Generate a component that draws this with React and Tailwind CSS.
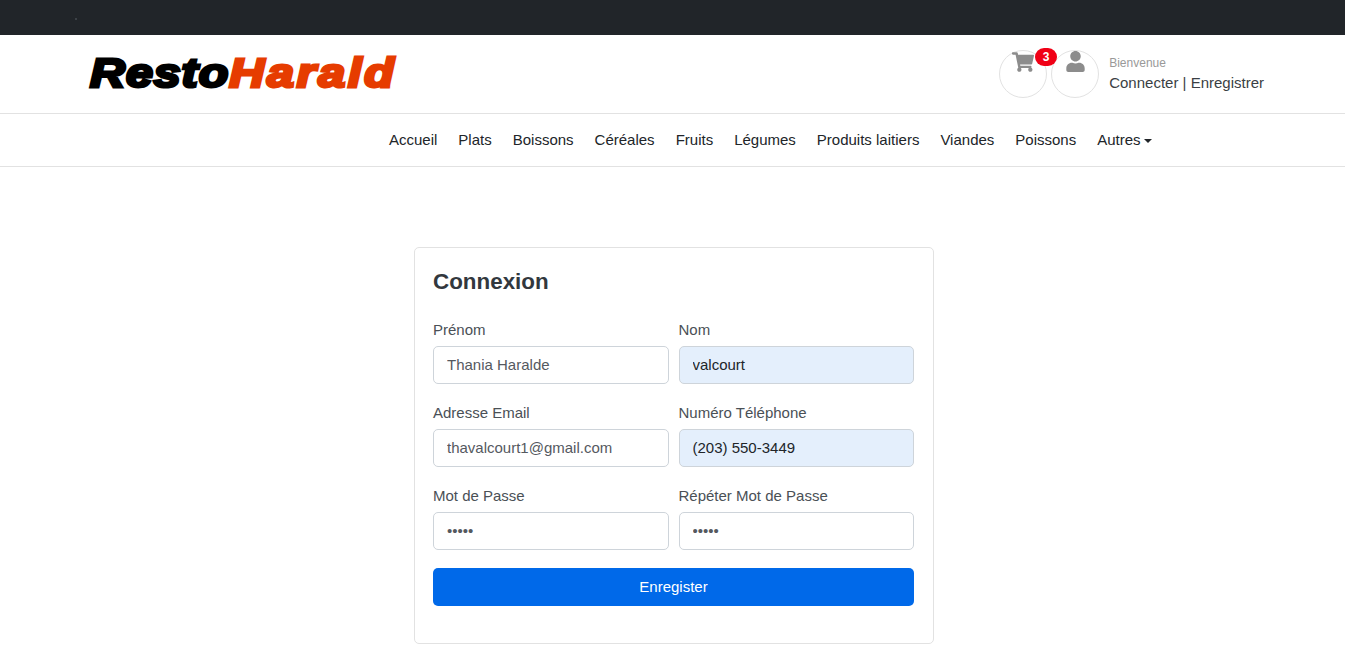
import React from "react";
import { FaShoppingCart, FaUser } from "react-icons/fa";

const navItems = ["Accueil", "Plats", "Boissons", "Céréales", "Fruits", "Légumes", "Produits laitiers", "Viandes", "Poissons"];

const fields = [
  { label: "Prénom", value: "Thania Haralde", type: "text" },
  { label: "Nom", value: "valcourt", type: "text", filled: true },
  { label: "Adresse Email", value: "thavalcourt1@gmail.com", type: "text" },
  { label: "Numéro Téléphone", value: "(203) 550-3449", type: "text", filled: true },
  { label: "Mot de Passe", value: "12345", type: "password" },
  { label: "Répéter Mot de Passe", value: "12345", type: "password" },
];

function Field({ label, value, type, filled }) {
  return (
    <label className="block">
      <span className="block h-[22px] mb-[5px] text-[15px] leading-[22px] text-[#4a5056]">{label}</span>
      <input
        type={type}
        defaultValue={value}
        className={
          filled
            ? "block w-full h-[38px] pl-[13px] pb-[2px] border border-[#ced4da] rounded-[5px] bg-[#e4effc] text-[15px] text-[#212529] outline-none"
            : "block w-full h-[38px] pl-[13px] pb-[2px] border border-[#ced4da] rounded-[5px] bg-white text-[15px] text-[#55595f] outline-none"
        }
      />
    </label>
  );
}

export default function App() {
  return (
    <div className="h-[651px] overflow-hidden bg-white font-['Liberation_Sans',Arial,sans-serif] text-[#212529]">
      <div className="h-[35px] bg-[#212529] pl-[75px] pt-[18px]">
        <div className="h-[2px] w-[2px] bg-[#3c4146]"></div>
      </div>

      {/* Logo and account */}
      <header className="flex h-[79px] items-start justify-between border-b border-[#e2e2e2] pl-[90px] pr-[81px]">
        <div className="mt-[16px] flex h-[44px] origin-left scale-x-[1.18] items-center whitespace-nowrap text-[41px] leading-none font-bold italic">
          <span className="tracking-[0.8px] text-black [-webkit-text-stroke:3px_black]">Resto</span>
          <span className="tracking-[2.4px] text-[#e63c00] [-webkit-text-stroke:3px_#e63c00]">Harald</span>
        </div>
        <div className="mt-[15px] flex items-start">
          <div className="relative flex h-[48px] w-[48px] justify-center rounded-full border border-[#e2e2e2] text-[#8c8c8c]">
            <FaShoppingCart className="text-[22px]" />
            <span className="absolute right-[-11px] top-[-3px] flex h-[18px] w-[22px] items-center justify-center rounded-full bg-[#f00016] text-[12px] font-bold text-white">3</span>
          </div>
          <div className="ml-[4px] flex h-[48px] w-[48px] justify-center rounded-full border border-[#e2e2e2] text-[#8c8c8c]">
            <FaUser className="text-[21px]" />
          </div>
          <div className="ml-[10px] pt-[4px]">
            <div className="text-[12px] leading-[18px] text-[#999999]">Bienvenue</div>
            <div className="mt-[1px] text-[15px] leading-[20px] text-[#3a3f44]">Connecter | Enregistrer</div>
          </div>
        </div>
      </header>

      {/* Main menu */}
      <nav className="flex h-[53px] items-center gap-[21px] border-b border-[#e2e2e2] pl-[389px] pt-[1px] text-[15px]">
        {navItems.map((item) => (
          <span key={item}>{item}</span>
        ))}
        <span className="flex items-center">
          Autres
          <span className="ml-[3px] h-0 w-0 border-x-[4.5px] border-t-[4.5px] border-x-transparent border-t-[#212529]"></span>
        </span>
      </nav>

      {/* Form card */}
      <div className="ml-[414px] mt-[80px] w-[520px] rounded-[5px] border border-[#e2e2e2] pb-[37px] pl-[18px] pr-[19px] pt-[20px]">
        <h4 className="mb-[24px] text-[22.4px] leading-[27px] font-bold text-[#32383e]">Connexion</h4>
        <div className="grid grid-cols-2 gap-x-[10px] gap-y-[18px]">
          {fields.map((field) => (
            <Field key={field.label} {...field} />
          ))}
        </div>
        <button className="mt-[18px] h-[38px] w-full rounded-[5px] bg-[#0069e9] text-[15px] text-white">Enregister</button>
      </div>
    </div>
  );
}
